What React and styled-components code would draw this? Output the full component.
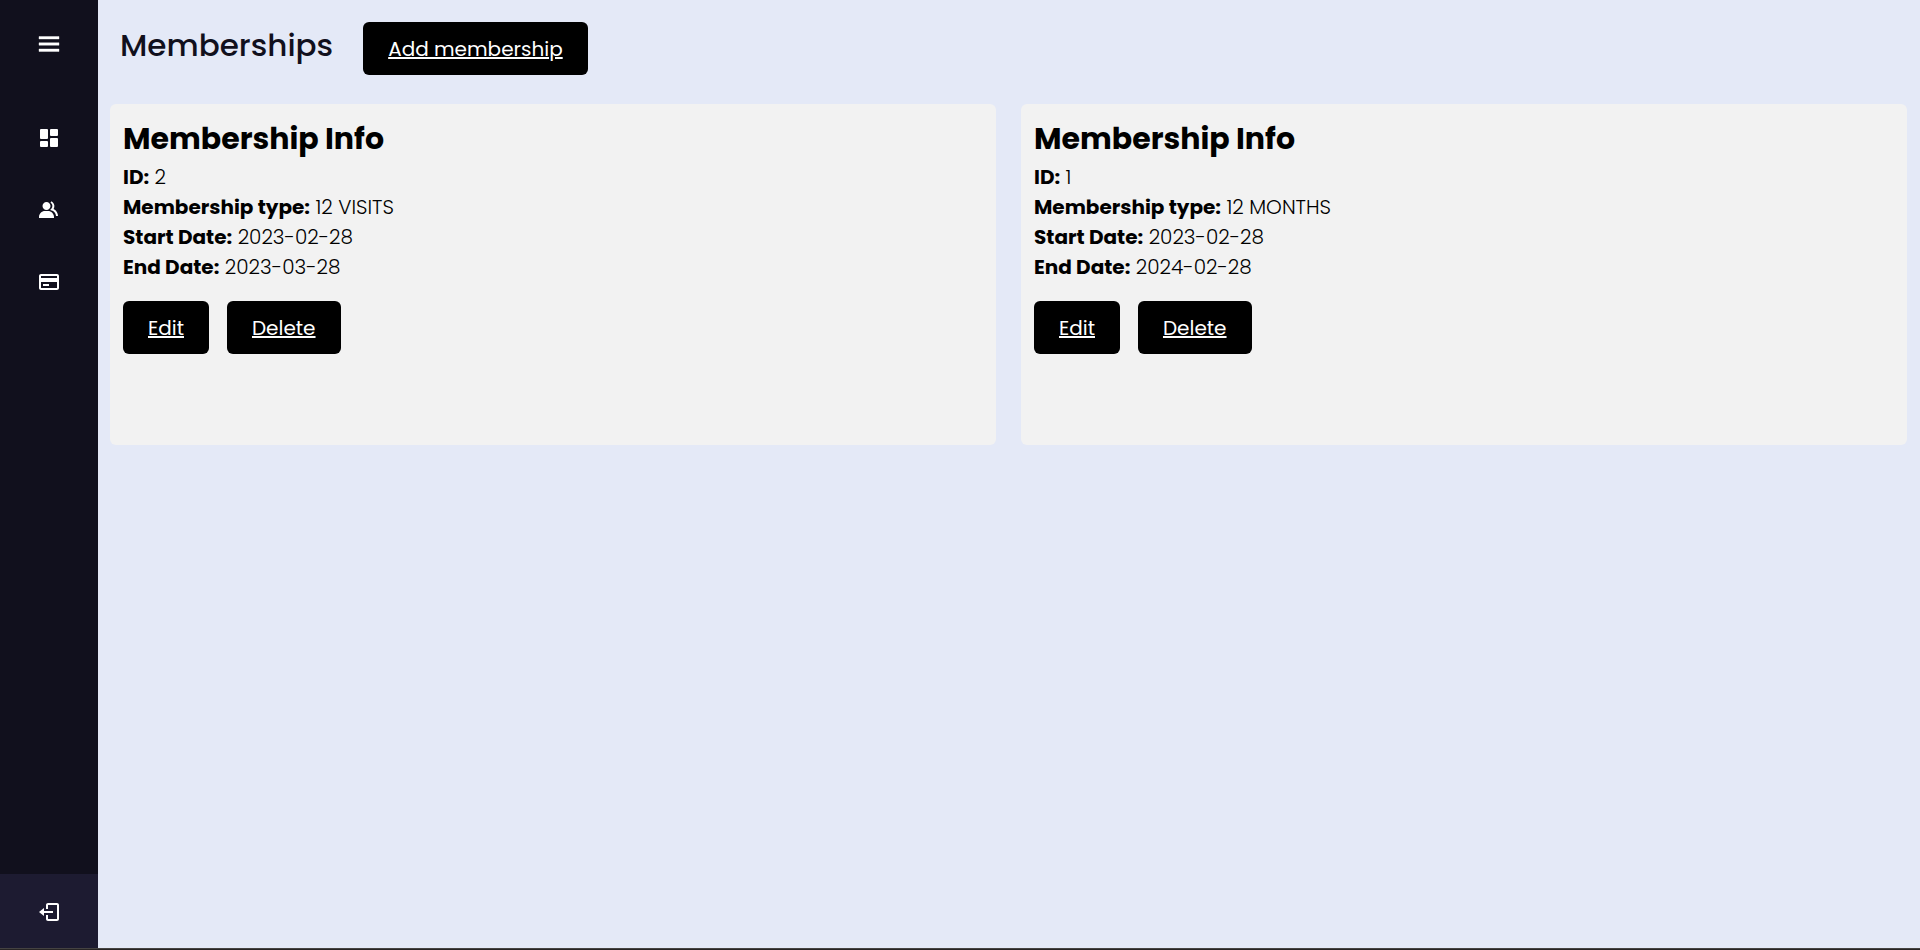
import React from "react";
import styled, { createGlobalStyle } from "styled-components";
import { BiMenu, BiSolidDashboard, BiSolidGroup, BiCreditCard, BiLogOut } from "react-icons/bi";

const GlobalStyle = createGlobalStyle`
  * { box-sizing: border-box; margin: 0; padding: 0; }
  body {
    background: #e4e9f7;
    color: #000;
    font-family: Poppins, Inter, sans-serif;
  }
`;

const Frame = styled.div`
  display: flex;
  min-height: 100vh;
  border-bottom: 1px solid #272424;
`;

const Page = styled.div`
  flex: 1;
  display: flex;
  min-width: 0;
  border-bottom: 1px solid #454342;
`;

const Sidebar = styled.aside`
  flex: 0 0 98px;
  display: flex;
  flex-direction: column;
  background: #11101d;
  color: #fff;
`;

const IconButton = styled.button`
  display: flex;
  align-items: center;
  justify-content: center;
  width: 100%;
  height: ${(p) => p.$height}px;
  border: 0;
  background: ${(p) => (p.$raised ? "#1d1b31" : "transparent")};
  color: inherit;
  cursor: pointer;
`;

const LogOutButton = styled(IconButton)`
  padding-top: 2px;
`;

const MenuIcon = styled(BiMenu)`
  stroke: currentColor;
  stroke-width: 0.3px;
`;

const Nav = styled.nav`
  flex: 1;
  padding-top: 14px;
`;

const NavLink = styled.a`
  display: flex;
  align-items: center;
  justify-content: center;
  height: 72px;
  color: inherit;
`;

const Main = styled.main`
  flex: 1;
  min-width: 0;
  padding: 22px 13px 22px 12px;
`;

const Header = styled.header`
  display: flex;
  align-items: flex-start;
  gap: 30px;
  padding-left: 10px;
  margin-bottom: 29px;
`;

const Title = styled.h1`
  font-size: 31px;
  line-height: 46px;
  font-weight: 500;
  color: #11101d;
`;

const ActionLink = styled.a`
  padding: 13px 25px 11px;
  border-radius: 6px;
  background: #000;
  color: #fff;
  font-size: 20px;
  line-height: 29px;
  text-decoration-thickness: 2px;
`;

const Cards = styled.section`
  display: grid;
  grid-template-columns: repeat(2, 1fr);
  gap: 25px;
`;

const Card = styled.article`
  min-height: 341px;
  padding: 12px 13px;
  border-radius: 6px;
  background: #f2f2f2;
`;

const CardTitle = styled.h2`
  font-size: 30px;
  line-height: 46px;
  font-weight: 700;
`;

const Field = styled.p`
  font-size: 20px;
  line-height: 30px;
  font-weight: 300;
`;

const Label = styled.strong`
  font-weight: 700;
`;

const Actions = styled.div`
  display: flex;
  gap: 18px;
  margin-top: 19px;
`;

const memberships = [
  { id: 2, type: "12 VISITS", start: "2023-02-28", end: "2023-03-28" },
  { id: 1, type: "12 MONTHS", start: "2023-02-28", end: "2024-02-28" },
];

function MembershipCard({ item }) {
  return (
    <Card>
      <CardTitle>Membership Info</CardTitle>
      <Field><Label>ID:</Label> {item.id}</Field>
      <Field><Label>Membership type:</Label> {item.type}</Field>
      <Field><Label>Start Date:</Label> {item.start}</Field>
      <Field><Label>End Date:</Label> {item.end}</Field>
      <Actions>
        <ActionLink href="#edit">Edit</ActionLink>
        <ActionLink href="#delete">Delete</ActionLink>
      </Actions>
    </Card>
  );
}

export default function App() {
  return (
    <>
      <GlobalStyle />
      <Frame>
        <Page>
          <Sidebar>
            <IconButton type="button" aria-label="Menu" $height={88}><MenuIcon size={30} /></IconButton>
            <Nav>
              <NavLink href="#dashboard" aria-label="Dashboard"><BiSolidDashboard size={24} /></NavLink>
              <NavLink href="#users" aria-label="Users"><BiSolidGroup size={24} /></NavLink>
              <NavLink href="#memberships" aria-label="Memberships"><BiCreditCard size={24} /></NavLink>
            </Nav>
            <LogOutButton type="button" aria-label="Log out" $height={74} $raised><BiLogOut size={24} /></LogOutButton>
          </Sidebar>
          <Main>
            <Header>
              <Title>Memberships</Title>
              <ActionLink href="#add">Add membership</ActionLink>
            </Header>
            <Cards>
              {memberships.map((item) => <MembershipCard key={item.id} item={item} />)}
            </Cards>
          </Main>
        </Page>
      </Frame>
    </>
  );
}
